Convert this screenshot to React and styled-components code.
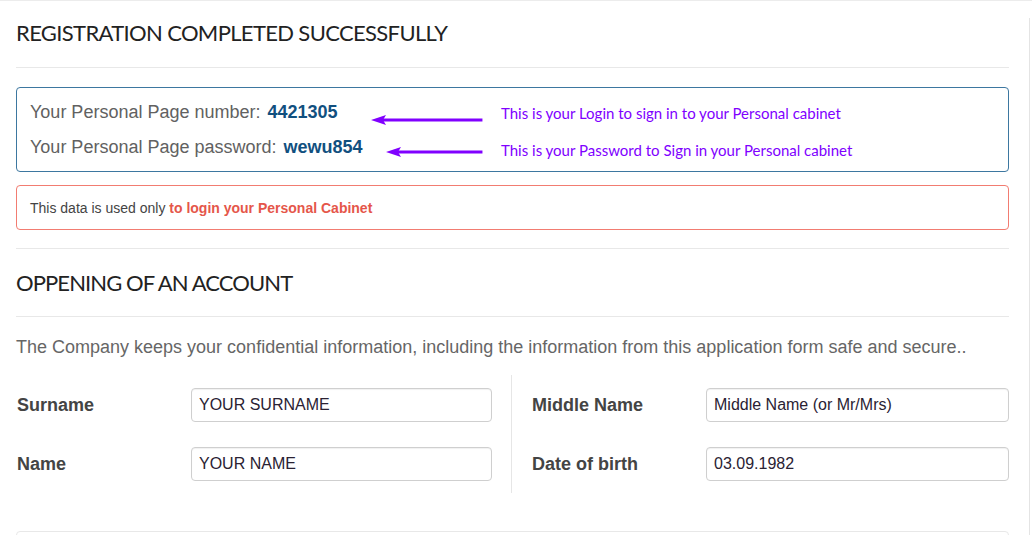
import React from 'react';
import styled, { createGlobalStyle } from 'styled-components';

const GlobalStyle = createGlobalStyle`
    html, body {
        margin: 0;
        padding: 0;
        background: #fff;
        overflow: hidden;
    }
    body {
        font-family: "Liberation Sans", Arial, sans-serif;
    }
`

const Page = styled.div`
    display: flex;
    min-height: 535px;
    border-top: 1px solid #ececec;
`

const Main = styled.div`
    width: 993px;
    padding: 0 20px 0 16px;
`

const Rail = styled.div`
    flex: 1;
    margin-top: 17px;
    border-left: 1px solid #e4e4e4;
`

const Heading = styled.h2`
    margin: 0;
    padding: ${props => props.$top}px 0 ${props => props.$bottom}px;
    border-bottom: 1px solid #e8e8e8;
    font-family: Lato, "Open Sans", sans-serif;
    font-weight: 400;
    font-size: 22px;
    line-height: 28px;
    letter-spacing: ${props => props.$tight ? -0.9 : -0.65}px;
    color: #222;
`

const InfoBox = styled.div`
    margin-top: 19px;
    padding: 7px 13px 6px;
    border: 1px solid #3d77a0;
    border-radius: 4px;
`

const InfoRow = styled.div`
    display: grid;
    grid-template-columns: 471px 1fr;
    align-items: center;
    height: 35px;
`

const InfoText = styled.div`
    display: flex;
    align-items: center;
    min-width: 0;
    font-size: 18px;
    color: #616161;
    white-space: nowrap;

    & b {
        margin-left: 7px;
        color: #11507f;
    }
`

const ArrowSvg = styled.svg`
    flex: 1 1 0;
    min-width: 0;
    height: 12px;
    margin: ${props => props.$drop}px 19px 0 ${props => props.$lead}px;
    overflow: visible;
`

const Note = styled.div`
    margin-top: ${props => props.$drop}px;
    font-family: Lato, "Open Sans", sans-serif;
    font-size: 15px;
    color: #8000ff;
    white-space: nowrap;
`

const Notice = styled.div`
    margin-top: 13px;
    padding: 12px 13px 11px;
    border: 1px solid #f27c71;
    border-radius: 4px;
    font-size: 14px;
    line-height: 20px;
    color: #444;

    & b {
        color: #e5564a;
    }
`

const Rule = styled.div`
    margin-top: 18px;
    border-top: 1px solid #e8e8e8;
`

const Lead = styled.p`
    margin: 0;
    padding: 19px 0 17px;
    font-size: 18px;
    line-height: 22px;
    color: #666;
    white-space: nowrap;
`

const FormGrid = styled.div`
    display: grid;
    grid-template-columns: 495px 1fr;
`

const FormColumn = styled.div`
    display: flex;
    flex-direction: column;
    gap: 25px;
    padding: 13px ${props => props.$right ? 0 : 19}px 12px ${props => props.$right ? 19 : 0}px;
    border-left: ${props => props.$right ? '1px solid #e6e6e6' : 'none'};
`

const Field = styled.label`
    display: grid;
    grid-template-columns: 175px 1fr;
    align-items: center;
`

const FieldName = styled.span`
    padding-left: 1px;
    font-size: 18px;
    font-weight: 700;
    color: #444;
`

const Input = styled.input`
    box-sizing: border-box;
    width: 100%;
    height: 34px;
    padding: 0 7px;
    border: 1px solid #cfcfcf;
    border-radius: 4px;
    box-shadow: inset 0 1px 1px rgba(0, 0, 0, 0.06);
    font-family: "Liberation Sans", Arial, sans-serif;
    font-size: 16px;
    color: #2a2233;
    outline: none;
`

const NextCard = styled.div`
    margin-top: 38px;
    height: 60px;
    border: 1px solid #e8e8e8;
    border-radius: 4px;
`

const Arrow = ({ lead, drop }) => (
    <ArrowSvg $lead={lead} $drop={drop}>
        <line x1="10" y1="6" x2="100%" y2="6" stroke="#8000ff" strokeWidth="3" />
        <polygon points="0,6 15,1 12,6 15,11" fill="#8000ff" />
    </ArrowSvg>
)

const credentials = [
    { label: 'Your Personal Page number:', value: '4421305', lead: 33, drop: 15, note: 'This is your Login to sign in to your Personal cabinet', noteDrop: 0 },
    { label: 'Your Personal Page password:', value: 'wewu854', lead: 23, drop: 8, note: 'This is your Password to Sign in your Personal cabinet', noteDrop: 5 },
]

const leftFields = [
    { name: 'Surname', value: 'YOUR SURNAME' },
    { name: 'Name', value: 'YOUR NAME' },
]

const rightFields = [
    { name: 'Middle Name', value: 'Middle Name (or Mr/Mrs)' },
    { name: 'Date of birth', value: '03.09.1982' },
]

export default function App() {
    return (
        <Page>
            <GlobalStyle />
            <Main>
                <Heading $top={18} $bottom={20}>REGISTRATION COMPLETED SUCCESSFULLY</Heading>
                <InfoBox>
                    {credentials.map(item => (
                        <InfoRow key={item.value}>
                            <InfoText>
                                {item.label}<b>{item.value}</b>
                                <Arrow lead={item.lead} drop={item.drop} />
                            </InfoText>
                            <Note $drop={item.noteDrop}>{item.note}</Note>
                        </InfoRow>
                    ))}
                </InfoBox>
                <Notice>This data is used only <b>to login your Personal Cabinet</b></Notice>
                <Rule />
                <Heading $top={20} $bottom={19} $tight>OPPENING OF AN ACCOUNT</Heading>
                <Lead>The Company keeps your confidential information, including the information from this application form safe and secure..</Lead>
                <FormGrid>
                    <FormColumn>
                        {leftFields.map(f => (
                            <Field key={f.name}>
                                <FieldName>{f.name}</FieldName>
                                <Input defaultValue={f.value} readOnly />
                            </Field>
                        ))}
                    </FormColumn>
                    <FormColumn $right>
                        {rightFields.map(f => (
                            <Field key={f.name}>
                                <FieldName>{f.name}</FieldName>
                                <Input defaultValue={f.value} readOnly />
                            </Field>
                        ))}
                    </FormColumn>
                </FormGrid>
                <NextCard />
            </Main>
            <Rail />
        </Page>
    );
}
